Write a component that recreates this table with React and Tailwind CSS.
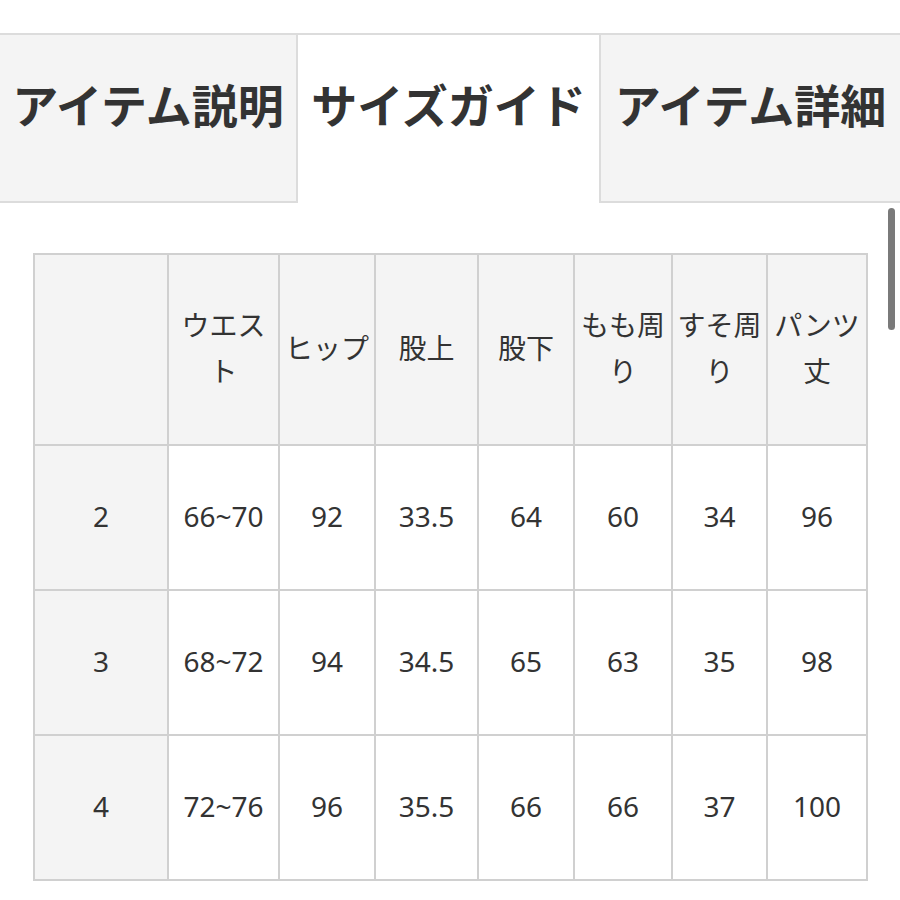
const jp = { fontFamily: '"Noto Sans", "Noto Sans CJK JP", sans-serif' };

const cols = [134, 111, 96, 103, 96, 98, 95, 100];

const headers = [
  null,
  ["ウエス", "ト"],
  ["ヒップ"],
  ["股上"],
  ["股下"],
  ["もも周", "り"],
  ["すそ周", "り"],
  ["パンツ", "丈"],
];

const rows = [
  ["2", "66~70", "92", "33.5", "64", "60", "34", "96"],
  ["3", "68~72", "94", "34.5", "65", "63", "35", "98"],
  ["4", "72~76", "96", "35.5", "66", "66", "37", "100"],
];

function Tab({ label, active, className }) {
  return (
    <div
      className={
        "h-[170px] border-t-2 border-[#dcdcdc] flex justify-center pt-[47px] " +
        (active ? "bg-white " : "bg-[#f4f4f4] border-b-2 ") +
        className
      }
    >
      <span className="text-[46px] font-bold leading-none text-[#333] whitespace-nowrap">
        {label}
      </span>
    </div>
  );
}

export default function App() {
  return (
    <div className="relative w-[900px] h-[900px] bg-white overflow-hidden text-[#333]" style={jp}>
      <div className="pt-[33px] flex">
        <Tab label="アイテム説明" className="w-[298px] border-r-2" />
        <Tab label="サイズガイド" active className="w-[301px]" />
        <Tab label="アイテム詳細" className="w-[301px] border-l-2" />
      </div>

      {/* scrollbar */}
      <div className="absolute left-[888px] top-[208px] w-[7px] h-[122px] rounded-full bg-[#7a7a7a]" />

      <div className="ml-[33px] mt-[50px] w-[835px] border-t-2 border-l-2 border-[#d0d0d0]">
        <div className="flex">
          {headers.map((h, i) => (
            <div
              key={i}
              style={{ width: cols[i] }}
              className="h-[191px] pb-1 bg-[#f4f4f4] border-r-2 border-b-2 border-[#d0d0d0] flex flex-col items-center justify-center text-[28px] leading-[46px]"
            >
              {h && h.map((line, j) => <span key={j}>{line}</span>)}
            </div>
          ))}
        </div>
        {rows.map((r, ri) => (
          <div key={ri} className="flex">
            {r.map((v, i) => (
              <div
                key={i}
                style={{ width: cols[i] }}
                className={
                  "h-[145px] pb-1 border-r-2 border-b-2 border-[#d0d0d0] flex items-center justify-center text-[28px] " +
                  (i === 0 ? "bg-[#f4f4f4]" : "bg-white")
                }
              >
                {v}
              </div>
            ))}
          </div>
        ))}
      </div>
    </div>
  );
}
